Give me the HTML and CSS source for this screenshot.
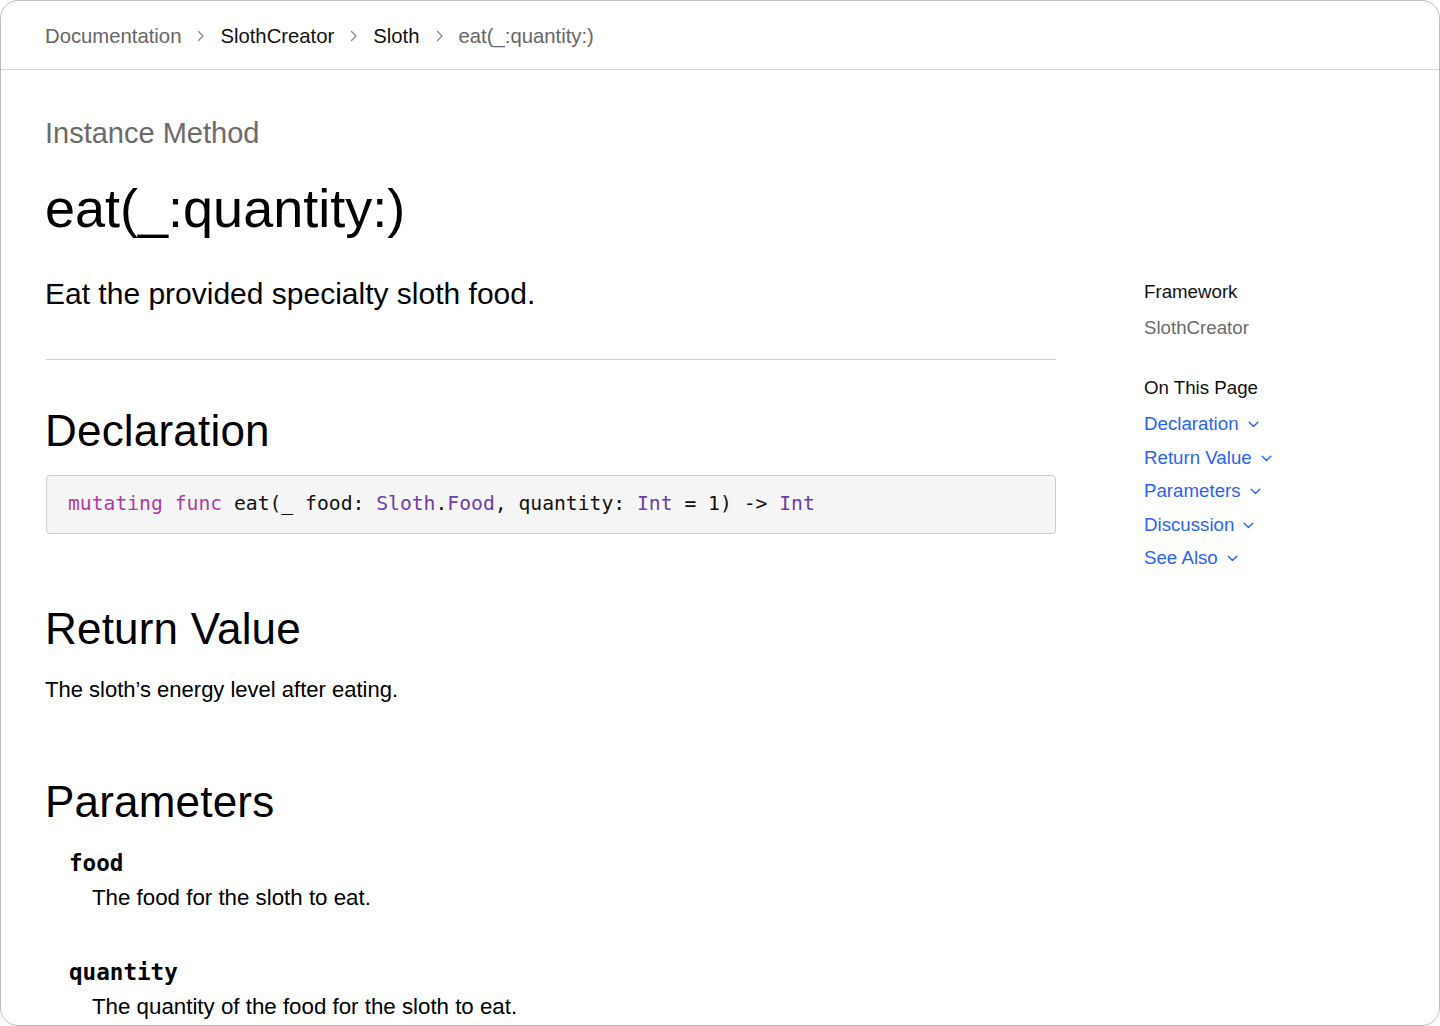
FILE: index.html
```html
<!DOCTYPE html>
<html lang="en">
<head>
<meta charset="utf-8">
<title>eat(_:quantity:)</title>
<link rel="stylesheet" href="styles.css">
</head>
<body>
<div class="frame">
  <nav class="crumbs">
    <span class="crumb muted">Documentation</span>
    <svg class="sep" width="8" height="12" viewBox="0 0 8 12"><path d="M1.5 1.5 L6 6 L1.5 10.5" fill="none" stroke="#8a8a8a" stroke-width="1.3" stroke-linecap="round" stroke-linejoin="round"/></svg>
    <span class="crumb">SlothCreator</span>
    <svg class="sep" width="8" height="12" viewBox="0 0 8 12"><path d="M1.5 1.5 L6 6 L1.5 10.5" fill="none" stroke="#8a8a8a" stroke-width="1.3" stroke-linecap="round" stroke-linejoin="round"/></svg>
    <span class="crumb">Sloth</span>
    <svg class="sep" width="8" height="12" viewBox="0 0 8 12"><path d="M1.5 1.5 L6 6 L1.5 10.5" fill="none" stroke="#8a8a8a" stroke-width="1.3" stroke-linecap="round" stroke-linejoin="round"/></svg>
    <span class="crumb muted">eat(_:quantity:)</span>
  </nav>

  <main class="page">
    <div class="eyebrow">Instance Method</div>
    <h1 class="title">eat(_:quantity:)</h1>

    <div class="columns">
      <div class="content">
        <p class="abstract">Eat the provided specialty sloth food.</p>
        <hr class="rule">

        <h2 class="heading heading-first">Declaration</h2>
        <div class="code"><span class="kw">mutating</span> <span class="kw">func</span> eat(_ food: <span class="ty">Sloth</span>.<span class="ty">Food</span>, quantity: <span class="ty">Int</span> = 1) -&gt; <span class="ty">Int</span></div>

        <h2 class="heading">Return Value</h2>
        <p class="body">The sloth’s energy level after eating.</p>

        <h2 class="heading heading-params">Parameters</h2>
        <dl class="params">
          <dt class="param-name">food</dt>
          <dd class="param-desc">The food for the sloth to eat.</dd>
          <dt class="param-name param-next">quantity</dt>
          <dd class="param-desc">The quantity of the food for the sloth to eat.</dd>
        </dl>
      </div>

      <aside class="sidebar">
        <div class="side-label">Framework</div>
        <div class="side-value">SlothCreator</div>
        <div class="side-label side-gap">On This Page</div>
        <ul class="toc">
          <li class="toc-item">Declaration <svg class="chev" width="11" height="7" viewBox="0 0 11 7"><path d="M1.2 1.2 L5.5 5.4 L9.8 1.2" fill="none" stroke="#2b63f2" stroke-width="1.4" stroke-linecap="round" stroke-linejoin="round"/></svg></li>
          <li class="toc-item">Return Value <svg class="chev" width="11" height="7" viewBox="0 0 11 7"><path d="M1.2 1.2 L5.5 5.4 L9.8 1.2" fill="none" stroke="#2b63f2" stroke-width="1.4" stroke-linecap="round" stroke-linejoin="round"/></svg></li>
          <li class="toc-item">Parameters <svg class="chev" width="11" height="7" viewBox="0 0 11 7"><path d="M1.2 1.2 L5.5 5.4 L9.8 1.2" fill="none" stroke="#2b63f2" stroke-width="1.4" stroke-linecap="round" stroke-linejoin="round"/></svg></li>
          <li class="toc-item">Discussion <svg class="chev" width="11" height="7" viewBox="0 0 11 7"><path d="M1.2 1.2 L5.5 5.4 L9.8 1.2" fill="none" stroke="#2b63f2" stroke-width="1.4" stroke-linecap="round" stroke-linejoin="round"/></svg></li>
          <li class="toc-item">See Also <svg class="chev" width="11" height="7" viewBox="0 0 11 7"><path d="M1.2 1.2 L5.5 5.4 L9.8 1.2" fill="none" stroke="#2b63f2" stroke-width="1.4" stroke-linecap="round" stroke-linejoin="round"/></svg></li>
        </ul>
      </aside>
    </div>
  </main>
</div>
</body>
</html>
```

FILE: styles.css
```css
html, body {
  margin: 0;
  padding: 0;
  background: #ffffff;
}

body {
  font-family: "Liberation Sans", Arial, sans-serif;
  color: #000000;
}

.frame {
  box-sizing: border-box;
  width: 1440px;
  height: 1026px;
  border: 1px solid #bdbdbd;
  border-radius: 18px;
  overflow: hidden;
  background: #ffffff;
}

/* Breadcrumbs */
.crumbs {
  box-sizing: border-box;
  height: 69px;
  padding: 2px 0 0 44px;
  border-bottom: 1px solid #d4d4d4;
  display: flex;
  align-items: center;
  font-size: 20.3px;
  line-height: 24px;
}

.crumb {
  color: #111111;
}

.crumb.muted {
  color: #666666;
}

.sep {
  margin: 0 15px 0 16px;
  flex: none;
}

/* Page */
.page {
  padding: 0 0 0 44px;
}

.eyebrow {
  margin-top: 45px;
  font-size: 29px;
  line-height: 36px;
  color: #6b6b6b;
}

.title {
  margin: 25px 0 0;
  font-size: 54px;
  line-height: 64px;
  font-weight: normal;
  color: #000000;
}

.columns {
  display: flex;
  gap: 88px;
  margin-top: 34px;
}

.content {
  width: 1011px;
  flex: none;
}

.abstract {
  margin: 0;
  font-size: 30px;
  line-height: 40px;
}

.rule {
  margin: 45px 0 0 1px;
  border: 0;
  border-top: 1px solid #cfcfcf;
  height: 0;
}

.heading {
  margin: 67px 0 0;
  font-size: 44px;
  line-height: 56px;
  font-weight: normal;
  letter-spacing: 0.2px;
}

.heading-first {
  margin-top: 43px;
}

.heading-params {
  margin-top: 69px;
}

.code {
  margin: 16px 0 0 1px;
  border: 1px solid #cbcbcb;
  border-radius: 4px;
  background: #f5f5f5;
  padding: 16px 21px 17px;
  font-family: "DejaVu Sans Mono", "Liberation Mono", monospace;
  font-size: 19.7px;
  line-height: 24px;
  color: #111111;
  white-space: pre;
}

.kw {
  color: #ad3da4;
}

.ty {
  color: #703daa;
}

.body {
  margin: 18px 0 0;
  font-size: 22px;
  line-height: 30px;
}

.params {
  margin: 18px 0 0;
}

.param-name {
  margin-left: 24px;
  font-family: "DejaVu Sans Mono", "Liberation Mono", monospace;
  font-weight: bold;
  font-size: 22.6px;
  line-height: 30px;
}

.param-next {
  margin-top: 44px;
}

.param-desc {
  margin: 5px 0 0 47px;
  font-size: 22.3px;
  line-height: 30px;
}

/* Sidebar */
.sidebar {
  flex: none;
  width: 200px;
  font-size: 18.7px;
}

.side-label {
  line-height: 36px;
  color: #111111;
}

.side-value {
  line-height: 36px;
  color: #6b6b6b;
}

.side-gap {
  margin-top: 24px;
}

.toc {
  list-style: none;
  margin: 1px 0 0;
  padding: 0;
}

.toc-item {
  line-height: 33.5px;
  color: #2b63f2;
  display: flex;
  align-items: center;
  gap: 9px;
}

.chev {
  flex: none;
  margin-top: 2px;
}
```
